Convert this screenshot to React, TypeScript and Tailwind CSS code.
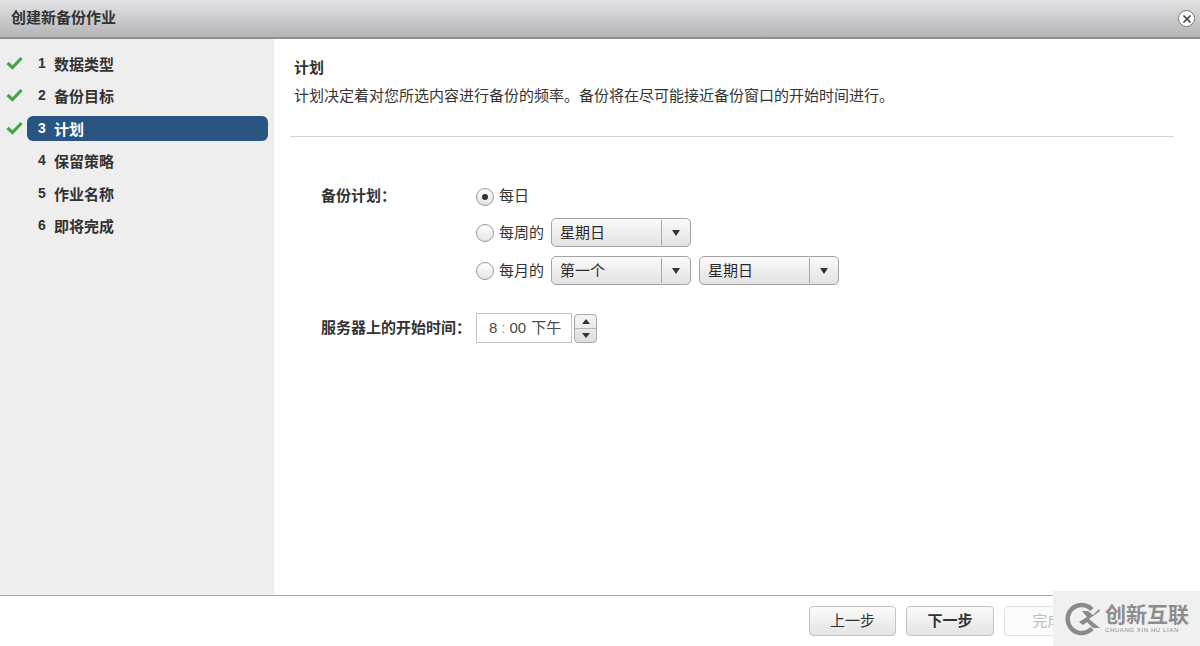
import { X } from "lucide-react";

const FONT = "font-['Liberation_Sans','Noto_Sans_CJK_SC',sans-serif]";

const STEPS = [
  { num: 1, label: "数据类型", done: true },
  { num: 2, label: "备份目标", done: true },
  { num: 3, label: "计划", done: true, active: true },
  { num: 4, label: "保留策略" },
  { num: 5, label: "作业名称" },
  { num: 6, label: "即将完成" },
];

function CheckMark() {
  return (
    <svg width="17" height="14" viewBox="0 0 17 14" fill="none">
      <path d="M1.5 7l5 4.5L15.5 2" stroke="#46a546" strokeWidth="3.2" />
    </svg>
  );
}

function Radio({ checked }: { checked?: boolean }) {
  return (
    <span className="flex h-[18px] w-[18px] shrink-0 items-center justify-center rounded-full border border-[#9a9a9a] bg-gradient-to-b from-[#ffffff] to-[#e4e4e4]">
      {checked ? <span className="h-[6px] w-[6px] rounded-full bg-[#333333]" /> : null}
    </span>
  );
}

function Select({ label }: { label: string }) {
  return (
    <div className="flex h-[29px] w-[140px] items-center rounded-[5px] border border-[#a3a3a3] bg-gradient-to-b from-[#fbfbfb] to-[#e2e2e2] text-[15px] text-[#2a2a2a]">
      <span className="flex-1 pl-[8px] pt-[2px]">{label}</span>
      <span className="h-[25px] w-px bg-[#a8a8a8]" />
      <span className="flex w-[28px] justify-center">
        <svg width="8" height="6" viewBox="0 0 8 6">
          <path d="M0 0h8L4 6z" fill="#333333" />
        </svg>
      </span>
    </div>
  );
}

export default function App() {
  return (
    <div className={`flex h-[646px] w-[1200px] flex-col overflow-hidden bg-white ${FONT} relative`}>
      <header className="flex h-[39px] shrink-0 items-center justify-between border-b-2 border-[#8f8f8f] bg-gradient-to-b from-[#e3e3e5] to-[#b4b4b6] pl-[11px] pr-[5px]">
        <h1 className="text-[15px] font-bold text-[#333333]">创建新备份作业</h1>
        <button className="flex h-[17px] w-[17px] items-center justify-center rounded-full border border-[#777777] bg-white">
          <X size={12} strokeWidth={3.5} className="text-[#444444]" />
        </button>
      </header>

      <div className="flex min-h-0 flex-1">
        <aside className="flex w-[274px] shrink-0 flex-col gap-[7.5px] bg-[#eeeeee] pl-[6px] pr-[6px] pt-[12px]">
          {STEPS.map((step) => (
            <div key={step.num} className="flex h-[25px] items-center">
              <span className="flex w-[21px] shrink-0 -translate-y-[1px]">
                {step.done ? <CheckMark /> : null}
              </span>
              <div
                className={`flex h-[25px] flex-1 items-center rounded-[6px] pl-[11px] pt-[3px] text-[15px] font-bold ${
                  step.active ? "bg-[#2a5583] text-white" : "text-[#333333]"
                }`}
              >
                <span className="w-[16px] -translate-y-[2px] text-[14px]">{step.num}</span>
                <span>{step.label}</span>
              </div>
            </div>
          ))}
        </aside>

        <main className="min-w-0 flex-1 pl-[16px] pr-[26px] pt-[19px]">
          <div className="pl-[4px]">
            <h2 className="text-[15px] font-bold leading-[20px] text-[#333333]">计划</h2>
            <p className="mt-[8px] text-[15px] leading-[20px] text-[#333333]">
              计划决定着对您所选内容进行备份的频率。备份将在尽可能接近备份窗口的开始时间进行。
            </p>
          </div>
          <div className="mt-[30px] h-px bg-[#d4d4d4]" />

          <div className="mt-[43px] flex flex-col pl-[31px] text-[15px] text-[#333333]">
            <div className="flex">
              <span className="w-[155px] pt-[6px] font-bold leading-[20px]">备份计划：</span>
              <div className="flex flex-col gap-[9px]">
                <label className="flex h-[29px] translate-y-[2px] items-center gap-[5px]">
                  <Radio checked />
                  <span>每日</span>
                </label>
                <div className="flex h-[29px] items-center gap-[5px]">
                  <Radio />
                  <span className="w-[47px] pt-[2px]">每周的</span>
                  <Select label="星期日" />
                </div>
                <div className="flex h-[29px] items-center gap-[8px]">
                  <div className="flex items-center gap-[5px]">
                    <Radio />
                    <span className="w-[47px] pt-[2px]">每月的</span>
                    <Select label="第一个" />
                  </div>
                  <Select label="星期日" />
                </div>
              </div>
            </div>

            <div className="mt-[28px] flex items-center">
              <span className="w-[155px] font-bold">服务器上的开始时间：</span>
              <div className="flex h-[30px] w-[96px] items-center border border-[#c4c4c4] bg-white pl-[12px] text-[#4a4a4a]">
                8<span className="mx-[4px] text-[#999999]">:</span>00<span className="ml-[5px]">下午</span>
              </div>
              <div className="ml-[2px] flex h-[29px] w-[23px] flex-col items-center rounded-[4px] border border-[#a9a9a9] bg-gradient-to-b from-[#f6f6f6] to-[#dddddd]">
                <span className="flex flex-1 items-center">
                  <svg width="8" height="5" viewBox="0 0 8 5">
                    <path d="M4 0l4 5H0z" fill="#333333" />
                  </svg>
                </span>
                <span className="h-px w-full bg-[#b5b5b5]" />
                <span className="flex flex-1 items-center">
                  <svg width="8" height="5" viewBox="0 0 8 5">
                    <path d="M0 0h8L4 5z" fill="#333333" />
                  </svg>
                </span>
              </div>
            </div>
          </div>
        </main>
      </div>

      <footer className="flex h-[51px] shrink-0 items-start gap-[10px] border-t border-[#a8a8a8] bg-white pl-[809px] pt-[10px] text-[15px]">
        <button className="h-[30px] w-[87px] rounded-[4px] border border-[#c4c4c4] bg-gradient-to-b from-[#fbfbfb] to-[#e4e4e4] text-[#333333]">
          上一步
        </button>
        <button className="h-[30px] w-[88px] rounded-[4px] border border-[#c4c4c4] bg-gradient-to-b from-[#fbfbfb] to-[#e4e4e4] font-bold text-[#333333]">
          下一步
        </button>
        <button className="h-[30px] w-[87px] rounded-[4px] border border-[#e2e2e2] bg-[#fbfbfb] text-[#bbbbbb]">
          完成
        </button>
      </footer>

      <div className="absolute bottom-0 right-0 flex h-[55px] w-[147px] items-center bg-[#f0f0f0] pl-[12px]">
        <svg width="36" height="36" viewBox="0 0 36 36" fill="none">
          <path d="M27 8.5A14 14 0 1 0 27 27.5" stroke="#8a8a8a" strokeWidth="4.5" />
          <path d="M11 12l12 12M35 10L24 18 35 27h-7l-6-6-4 3-4-3 8-5-5-6h6l5 4 6-6z" fill="#8a8a8a" />
        </svg>
        <div className="ml-[4px] flex flex-col text-[#8c8c8c]">
          <span className="whitespace-nowrap text-[21px] font-bold leading-[22px]">创新互联</span>
          <span className="whitespace-nowrap text-[6px] leading-[8px] tracking-[0.6px]">CHUANG XIN HU LIAN</span>
        </div>
      </div>
    </div>
  );
}
